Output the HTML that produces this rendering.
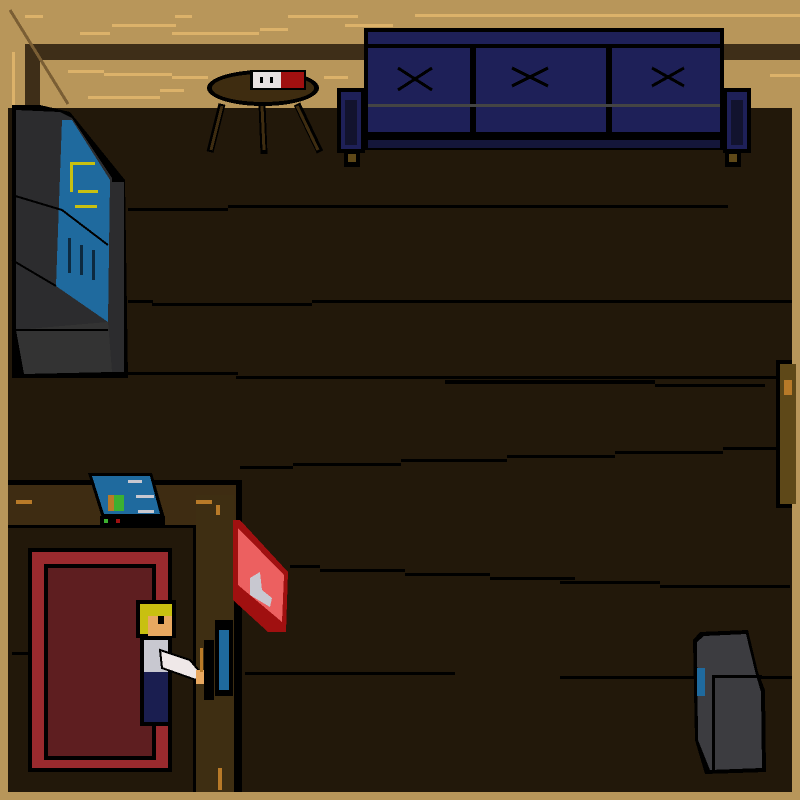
<!DOCTYPE html>
<html><head><style>html,body{margin:0;padding:0;background:#b8965a}svg{display:block}</style></head><body>
<svg width="800" height="800" viewBox="0 0 800 800" xmlns="http://www.w3.org/2000/svg" shape-rendering="crispEdges">
<rect width="800" height="800" fill="#b8965a"/>
<g fill="#dcb26a">
<rect x="25" y="15" width="18" height="3"/><rect x="175" y="15" width="17" height="3"/><rect x="288" y="15" width="70" height="3"/><rect x="112" y="24" width="64" height="3"/><rect x="80" y="32" width="30" height="3"/><rect x="345" y="24" width="48" height="3"/><rect x="172" y="32" width="87" height="3"/><rect x="260" y="28" width="28" height="3"/><rect x="415" y="14" width="385" height="3"/><rect x="12" y="52" width="3" height="55"/><rect x="68" y="70" width="36" height="3"/><rect x="104" y="73" width="68" height="3"/><rect x="172" y="76" width="36" height="3"/><rect x="160" y="89" width="24" height="3"/><rect x="88" y="96" width="72" height="3"/><rect x="324" y="76" width="24" height="3"/><rect x="760" y="52" width="40" height="3"/><rect x="770" y="74" width="30" height="3"/></g>
<rect x="25" y="44" width="775" height="16" fill="#3e2e18"/>
<rect x="25" y="44" width="15" height="64" fill="#3e2e18"/>
<path d="M10 10 L68 104" stroke="#7a5e34" stroke-width="3"/>
<rect x="8" y="108" width="784" height="684" fill="#22180a"/>
<g fill="#000">
<rect x="128" y="208" width="100" height="3"/><rect x="228" y="205" width="500" height="3"/>
<rect x="128" y="300" width="25" height="3"/><rect x="152" y="303" width="160" height="3"/><rect x="312" y="300" width="480" height="3"/>
<rect x="128" y="372" width="110" height="3"/><rect x="236" y="376" width="560" height="3"/>
<rect x="445" y="380" width="210" height="4"/><rect x="655" y="384" width="110" height="3"/>
<rect x="240" y="466" width="53" height="3"/><rect x="293" y="463" width="108" height="3"/><rect x="401" y="459" width="106" height="3"/><rect x="507" y="455" width="108" height="3"/><rect x="615" y="451" width="108" height="3"/><rect x="723" y="447" width="53" height="3"/>
<rect x="290" y="565" width="30" height="3"/><rect x="320" y="569" width="85" height="3"/><rect x="405" y="573" width="85" height="3"/><rect x="490" y="577" width="85" height="3"/><rect x="560" y="581" width="100" height="3"/><rect x="660" y="585" width="130" height="3"/>
<rect x="245" y="672" width="210" height="3"/><rect x="560" y="676" width="232" height="3"/>
</g>
<rect x="776" y="360" width="16" height="148" fill="#000"/><rect x="780" y="364" width="16" height="140" fill="#5e4818"/><rect x="784" y="380" width="8" height="15" fill="#b87a28"/>
<!-- TV -->
<polygon points="12,105 40,105 70,112 125,180 128,378 12,378" fill="#000"/>
<polygon points="16,110 60,112 72,118 112,178 112,372 24,372 16,330" fill="#2c2c2e"/>
<polygon points="62,120 72,120 110,180 108,322 56,286" fill="#1f6a9e"/>
<rect x="112" y="182" width="12" height="190" fill="#2c2c2e"/>
<polygon points="16,330 108,322 112,372 24,374" fill="#333"/>
<path d="M12 195 L62 210 L108 245 M12 260 L56 286 M16 330 L108 330" stroke="#000" stroke-width="2" fill="none"/>
<g fill="#c8c010"><rect x="70" y="162" width="3" height="30"/><rect x="70" y="162" width="25" height="3"/><rect x="78" y="190" width="20" height="3"/><rect x="75" y="205" width="22" height="3"/></g>
<g fill="#0d2a40"><rect x="68" y="238" width="3" height="35"/><rect x="80" y="245" width="3" height="30"/><rect x="92" y="250" width="3" height="30"/></g>
<!-- table -->
<ellipse cx="263" cy="88" rx="56" ry="18" fill="#000"/><ellipse cx="263" cy="88" rx="51" ry="14" fill="#3e2c10"/>
<rect x="250" y="70" width="56" height="20" fill="#000"/><rect x="253" y="72" width="28" height="16" fill="#e8e0e0"/><rect x="281" y="72" width="23" height="16" fill="#a01010"/>
<rect x="260" y="77" width="3" height="6" fill="#000"/><rect x="270" y="77" width="3" height="6" fill="#000"/>
<g stroke="#000" stroke-width="7"><path d="M222 104 L210 152"/><path d="M262 104 L264 154"/><path d="M297 104 L320 152"/></g>
<g stroke="#3e2c10" stroke-width="3"><path d="M222 106 L211 150"/><path d="M262 106 L264 150"/><path d="M297 106 L318 150"/></g>
<!-- sofa -->
<rect x="364" y="28" width="360" height="122" fill="#000"/>
<rect x="368" y="32" width="352" height="12" fill="#1e2058"/>
<rect x="368" y="48" width="102" height="84" fill="#1e2058"/><rect x="476" y="48" width="130" height="84" fill="#1e2058"/><rect x="612" y="48" width="108" height="84" fill="#1e2058"/>
<rect x="368" y="104" width="352" height="3" fill="#444"/>
<rect x="368" y="140" width="352" height="8" fill="#14163a"/>
<rect x="337" y="88" width="28" height="65" fill="#000"/><rect x="341" y="92" width="20" height="57" fill="#1e2058"/><rect x="345" y="100" width="12" height="45" fill="#12132e"/>
<rect x="723" y="88" width="28" height="65" fill="#000"/><rect x="727" y="92" width="20" height="57" fill="#1e2058"/><rect x="731" y="100" width="12" height="45" fill="#12132e"/>
<rect x="344" y="152" width="16" height="15" fill="#000"/><rect x="348" y="154" width="8" height="8" fill="#5e4818"/>
<rect x="725" y="152" width="16" height="15" fill="#000"/><rect x="729" y="154" width="8" height="8" fill="#5e4818"/>
<g stroke="#000" stroke-width="3"><path d="M398 68 L432 90 M398 90 L432 68"/><path d="M512 68 L548 86 M512 86 L548 68"/><path d="M652 68 L684 86 M652 86 L684 68"/></g>
<!-- counter -->
<rect x="8" y="480" width="234" height="312" fill="#000"/>
<rect x="8" y="485" width="228" height="40" fill="#3e2c12"/>
<rect x="8" y="528" width="185" height="264" fill="#22180a"/>
<rect x="196" y="495" width="38" height="297" fill="#3e2e12"/>
<rect x="16" y="500" width="16" height="4" fill="#b87a28"/><rect x="196" y="500" width="16" height="4" fill="#b87a28"/>
<rect x="216" y="505" width="4" height="10" fill="#b87a28"/><rect x="218" y="768" width="4" height="22" fill="#b87a28"/>
<rect x="12" y="652" width="18" height="3" fill="#000"/>
<polygon points="88,473 152,473 165,518 102,518" fill="#000"/><polygon points="92,476 150,476 160,514 104,514" fill="#1f6a9e"/>
<rect x="108" y="495" width="16" height="16" fill="#3cb030"/><rect x="108" y="495" width="6" height="16" fill="#b87a28"/>
<rect x="136" y="495" width="18" height="3" fill="#c8c8d0"/><rect x="138" y="510" width="16" height="3" fill="#c8c8d0"/><rect x="128" y="480" width="14" height="3" fill="#c8c8d0"/>
<rect x="100" y="516" width="65" height="10" fill="#000"/><rect x="104" y="519" width="4" height="4" fill="#3cb030"/><rect x="116" y="519" width="4" height="4" fill="#a01010"/>
<rect x="28" y="548" width="144" height="224" fill="#000"/><rect x="32" y="552" width="136" height="216" fill="#9a2a2e"/>
<rect x="44" y="564" width="112" height="196" fill="#000"/><rect x="48" y="568" width="104" height="188" fill="#5e1e20"/>
<polygon points="233,520 240,520 288,572 286,632 268,632 233,600" fill="#a01010"/>
<polygon points="238,528 284,575 282,622 238,585" fill="#ec6060"/>
<polygon points="250,578 260,572 262,590 272,598 270,607 250,595" fill="#c8c8d0"/>
<!-- person -->
<rect x="136" y="600" width="40" height="38" fill="#000"/>
<rect x="140" y="604" width="32" height="30" fill="#c8c010"/>
<rect x="148" y="616" width="24" height="20" fill="#e8a860"/><rect x="158" y="616" width="6" height="8" fill="#000"/>
<rect x="140" y="636" width="30" height="90" fill="#000"/>
<rect x="144" y="640" width="24" height="32" fill="#c8c8d0"/>
<rect x="144" y="672" width="24" height="50" fill="#1a1e50"/>
<polygon points="160,650 190,660 200,672 196,680 162,668" fill="#efe8e8" stroke="#000" stroke-width="2"/>
<rect x="196" y="670" width="8" height="14" fill="#e8a860"/><rect x="200" y="648" width="3" height="24" fill="#b87a28"/>
<rect x="204" y="640" width="10" height="60" fill="#000"/>
<rect x="215" y="620" width="18" height="76" fill="#000"/><rect x="219" y="630" width="10" height="60" fill="#1f6a9e"/>
<!-- trash -->
<polygon points="700,632 748,630 758,672 765,690 766,772 705,774 695,740 693,640" fill="#000"/>
<polygon points="704,636 746,634 756,675 761,692 762,768 710,770 698,740 697,642" fill="#3c3c40"/>
<rect x="697" y="668" width="8" height="28" fill="#1f6a9e"/>
<rect x="712" y="676" width="3" height="94" fill="#000"/><rect x="712" y="675" width="50" height="3" fill="#000"/>
</svg>
</body></html>
